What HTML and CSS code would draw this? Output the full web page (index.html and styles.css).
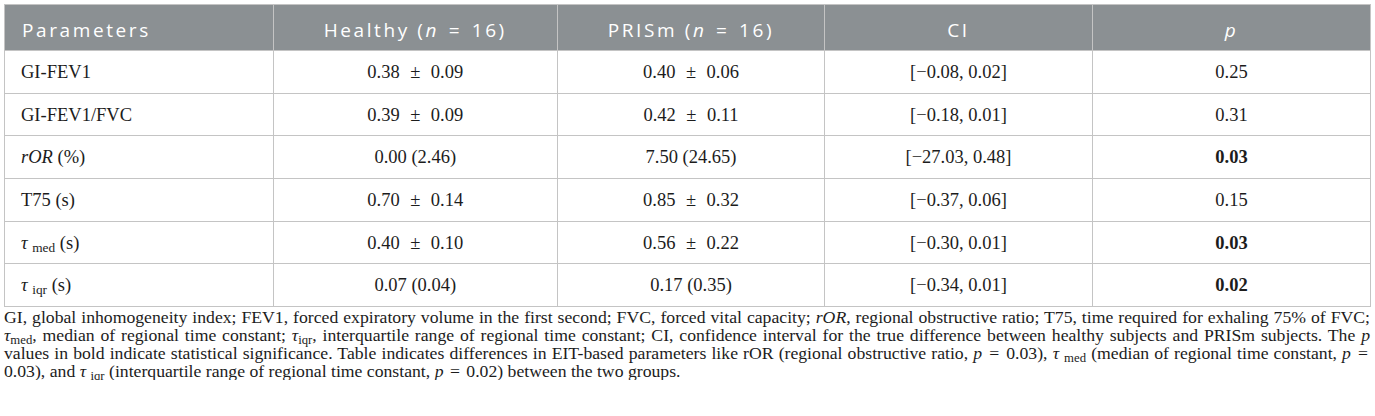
FILE: index.html
```html
<!DOCTYPE html>
<html lang="en">
<head>
<meta charset="utf-8">
<title>Table</title>
<link rel="stylesheet" href="styles.css">
</head>
<body>
<div class="wrap">
  <table class="data">
    <colgroup>
      <col class="c1"><col class="c2"><col class="c3"><col class="c4"><col class="c5">
    </colgroup>
    <thead>
      <tr>
        <th class="left">Parameters</th>
        <th>Healthy (<i>n</i> <span class="eq">=</span> 16)</th>
        <th>PRISm (<i>n</i> <span class="eq">=</span> 16)</th>
        <th>CI</th>
        <th><i>p</i></th>
      </tr>
    </thead>
    <tbody>
      <tr>
        <td class="left">GI-FEV1</td>
        <td>0.38<span class="pm">±</span>0.09</td>
        <td>0.40<span class="pm">±</span>0.06</td>
        <td>[−0.08, 0.02]</td>
        <td>0.25</td>
      </tr>
      <tr>
        <td class="left">GI-FEV1/FVC</td>
        <td>0.39<span class="pm">±</span>0.09</td>
        <td>0.42<span class="pm">±</span>0.11</td>
        <td>[−0.18, 0.01]</td>
        <td>0.31</td>
      </tr>
      <tr>
        <td class="left"><i>rOR</i> (%)</td>
        <td>0.00 (2.46)</td>
        <td>7.50 (24.65)</td>
        <td>[−27.03, 0.48]</td>
        <td><b>0.03</b></td>
      </tr>
      <tr>
        <td class="left">T75 (s)</td>
        <td>0.70<span class="pm">±</span>0.14</td>
        <td>0.85<span class="pm">±</span>0.32</td>
        <td>[−0.37, 0.06]</td>
        <td>0.15</td>
      </tr>
      <tr>
        <td class="left"><i>τ</i> <sub>med</sub> (s)</td>
        <td>0.40<span class="pm">±</span>0.10</td>
        <td>0.56<span class="pm">±</span>0.22</td>
        <td>[−0.30, 0.01]</td>
        <td><b>0.03</b></td>
      </tr>
      <tr>
        <td class="left"><i>τ</i> <sub>iqr</sub> (s)</td>
        <td>0.07 (0.04)</td>
        <td>0.17 (0.35)</td>
        <td>[−0.34, 0.01]</td>
        <td><b>0.02</b></td>
      </tr>
    </tbody>
  </table>
  <p class="caption">GI, global inhomogeneity index; FEV1, forced expiratory volume in the first second; FVC, forced vital capacity; <i>rOR</i>, regional obstructive ratio; T75, time required for exhaling 75% of FVC; <i>τ</i><sub>med</sub>, median of regional time constant; <i>τ</i><sub>iqr</sub>, interquartile range of regional time constant; CI, confidence interval for the true difference between healthy subjects and PRISm subjects. The <i>p</i> values in bold indicate statistical significance. Table indicates differences in EIT-based parameters like rOR (regional obstructive ratio, <i>p</i> <span class="eq">=</span> 0.03), <i>τ</i> <sub>med</sub> (median of regional time constant, <i>p</i> <span class="eq">=</span> 0.03), and <i>τ</i> <sub>iqr</sub> (interquartile range of regional time constant, <i>p</i> <span class="eq">=</span> 0.02) between the two groups.</p>
</div>
</body>
</html>
```

FILE: styles.css
```css
html, body {
  margin: 0;
  padding: 0;
  background: #ffffff;
}

.wrap {
  padding: 4px 5px 0 4px;
}

.data {
  border-collapse: collapse;
  table-layout: fixed;
  width: 1366px;
  font-family: "Liberation Serif", "Times New Roman", serif;
  font-size: 18.5px;
  color: #1c1c1c;
}

.c1 { width: 268.5px; }
.c2 { width: 284.5px; }
.c3 { width: 267px; }
.c4 { width: 268px; }
.c5 { width: 278px; }

.data th,
.data td {
  border: 1px solid #c4c4c4;
  text-align: center;
  padding: 0 16px;
  white-space: nowrap;
}

.data th {
  background: #8b9093;
  color: #ffffff;
  font-family: "Open Sans", "DejaVu Sans", sans-serif;
  font-weight: 400;
  font-size: 19px;
  letter-spacing: 2.6px;
  height: 46px;
  padding-top: 4px;
  box-sizing: border-box;
}

.data td {
  height: 42.7px;
  box-sizing: border-box;
  line-height: 20px;
}

.data .left {
  text-align: left;
}

.data th.left {
  padding-left: 17px;
}

.pm {
  display: inline-block;
  margin: 0 10.5px;
}

.eq {
  margin: 0 2px;
}

sub {
  font-size: 0.72em;
  vertical-align: -0.25em;
  line-height: 0;
}

.caption {
  margin: 0;
  padding-top: 1px;
  font-family: "Liberation Serif", "Times New Roman", serif;
  font-size: 17.7px;
  line-height: 18px;
  color: #1c1c1c;
  text-align: justify;
  width: 1366px;
}
```
